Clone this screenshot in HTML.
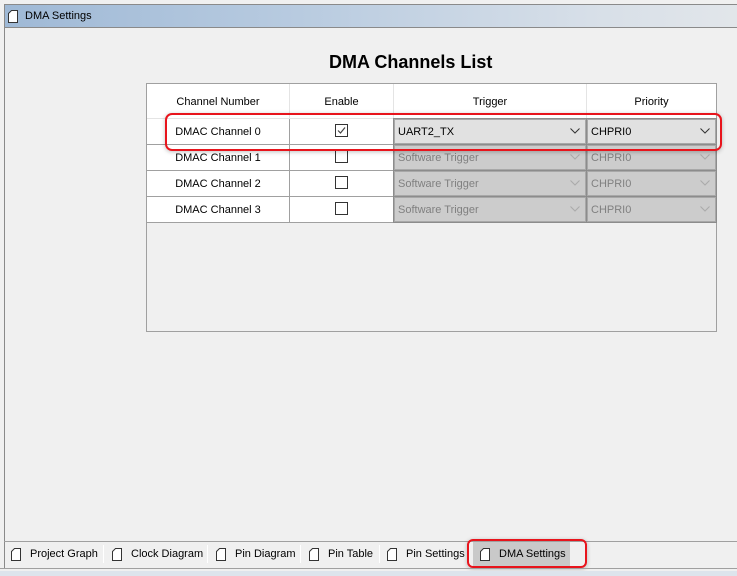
<!DOCTYPE html>
<html><head><meta charset="utf-8"><style>
*{margin:0;padding:0;box-sizing:border-box}
body{width:737px;height:576px;background:#f0f0f0;font-family:"Liberation Sans",sans-serif;font-size:11px;color:#000;position:relative;overflow:hidden}
.abs{position:absolute}
.doc{position:absolute;width:10px;height:13px}
.cell{position:absolute;display:flex;align-items:center;justify-content:center;font-size:11px;padding-top:1px}
.cb{position:absolute;border:1px solid #8c8c8c;box-shadow:inset 0 0 0 1px #a8a8a8;background:#cccccc;color:#808080;padding-left:4px;padding-top:1px;display:flex;align-items:center;font-size:11px}
.cb.on{background:#e1e1e1;color:#000}
.cb svg{position:absolute;right:6px;top:9px}
.chk{position:absolute;width:13px;height:13px;border:1px solid #333;background:#fff}
.tab{position:absolute;top:542px;height:24px;display:flex;align-items:center;font-size:11px}
.tab .doc{position:relative;margin-right:9px}
.sep{position:absolute;top:545px;width:1px;height:18px;background:#c8c8c8;border-right:1px solid #fff}
</style></head><body>
<div class="abs" style="left:4px;top:4px;width:733px;height:24px;border-top:1px solid #8a8a8a;border-bottom:1px solid #8a8a8a;border-left:1px solid #8a8a8a;background:linear-gradient(90deg,#9fb9d6,#b8cbe0 40%,#d7dfe8 80%,#e2e6ea)"></div>
<svg class="doc" style="left:8px;top:10px" viewBox="0 0 10 13"><path d="M3.5 0.5 H9.5 V12.5 H0.5 V3.5 Z" fill="#fff" stroke="#333"/></svg>
<div class="abs" style="left:25px;top:10px;font-size:11px">DMA Settings</div>
<div class="abs" style="left:4px;top:28px;width:1px;height:540px;background:#8a8a8a"></div>
<div class="abs" style="left:329px;top:52px;font-size:18px;font-weight:bold">DMA Channels List</div>
<div class="abs" style="left:146px;top:83px;width:571px;height:249px;border:1px solid #a0a0a0;background:#f0f0f0"></div>
<div class="abs" style="left:147px;top:84px;width:569px;height:138px;background:#fff"></div>
<div class="abs" style="left:289px;top:84px;width:1px;height:34px;background:#e4e4e4"></div>
<div class="abs" style="left:393px;top:84px;width:1px;height:34px;background:#e4e4e4"></div>
<div class="abs" style="left:586px;top:84px;width:1px;height:34px;background:#e4e4e4"></div>
<div class="cell" style="left:147px;top:84px;width:142px;height:35px">Channel Number</div>
<div class="cell" style="left:290px;top:84px;width:103px;height:35px">Enable</div>
<div class="cell" style="left:394px;top:84px;width:192px;height:35px">Trigger</div>
<div class="cell" style="left:587px;top:84px;width:129px;height:35px">Priority</div>
<div class="abs" style="left:147px;top:144px;width:246px;height:1px;background:#a0a0a0"></div>
<div class="abs" style="left:147px;top:170px;width:246px;height:1px;background:#a0a0a0"></div>
<div class="abs" style="left:147px;top:196px;width:246px;height:1px;background:#a0a0a0"></div>
<div class="abs" style="left:147px;top:222px;width:569px;height:1px;background:#a0a0a0"></div>
<div class="abs" style="left:289px;top:118px;width:1px;height:104px;background:#a0a0a0"></div>
<div class="abs" style="left:147px;top:118px;width:246px;height:1px;background:#e4e4e4"></div>
<div class="cell" style="left:147px;top:118px;width:142px;height:26px">DMAC Channel 0</div>
<div class="cell" style="left:147px;top:144px;width:142px;height:26px">DMAC Channel 1</div>
<div class="cell" style="left:147px;top:170px;width:142px;height:26px">DMAC Channel 2</div>
<div class="cell" style="left:147px;top:196px;width:142px;height:26px">DMAC Channel 3</div>
<div class="chk" style="left:335px;top:124px"><svg width="11" height="11" style="position:absolute;left:0;top:0"><path d="M2 5.5 L4.5 8 L9 2.5" stroke="#444" stroke-width="1.2" fill="none"/></svg></div>
<div class="chk" style="left:335px;top:150px"></div>
<div class="chk" style="left:335px;top:176px"></div>
<div class="chk" style="left:335px;top:202px"></div>
<div class="cb on" style="left:393px;top:118px;width:194px;height:27px">UART2_TX<svg width="10" height="6"><path d="M0.5 0.5 L5 5 L9.5 0.5" stroke="#333" fill="none"/></svg></div>
<div class="cb on" style="left:586px;top:118px;width:131px;height:27px">CHPRI0<svg width="10" height="6"><path d="M0.5 0.5 L5 5 L9.5 0.5" stroke="#333" fill="none"/></svg></div>
<div class="cb" style="left:393px;top:144px;width:194px;height:27px">Software Trigger<svg width="10" height="6"><path d="M0.5 0.5 L5 5 L9.5 0.5" stroke="#aaa" fill="none"/></svg></div>
<div class="cb" style="left:586px;top:144px;width:131px;height:27px">CHPRI0<svg width="10" height="6"><path d="M0.5 0.5 L5 5 L9.5 0.5" stroke="#aaa" fill="none"/></svg></div>
<div class="cb" style="left:393px;top:170px;width:194px;height:27px">Software Trigger<svg width="10" height="6"><path d="M0.5 0.5 L5 5 L9.5 0.5" stroke="#aaa" fill="none"/></svg></div>
<div class="cb" style="left:586px;top:170px;width:131px;height:27px">CHPRI0<svg width="10" height="6"><path d="M0.5 0.5 L5 5 L9.5 0.5" stroke="#aaa" fill="none"/></svg></div>
<div class="cb" style="left:393px;top:196px;width:194px;height:27px">Software Trigger<svg width="10" height="6"><path d="M0.5 0.5 L5 5 L9.5 0.5" stroke="#aaa" fill="none"/></svg></div>
<div class="cb" style="left:586px;top:196px;width:131px;height:27px">CHPRI0<svg width="10" height="6"><path d="M0.5 0.5 L5 5 L9.5 0.5" stroke="#aaa" fill="none"/></svg></div>
<div class="abs" style="left:165px;top:113px;width:557px;height:38px;border:2px solid #e8141c;border-radius:7px;box-shadow:0 1px 4px rgba(0,0,0,.25)"></div>
<div class="abs" style="left:4px;top:541px;width:733px;height:1px;background:#a0a0a0"></div>
<div class="abs" style="left:473px;top:542px;width:97px;height:24px;background:#c9c9c9"></div>
<div class="tab" style="left:11px"><svg class="doc" viewBox="0 0 10 13"><path d="M3.5 0.5 H9.5 V12.5 H0.5 V3.5 Z" fill="#fff" stroke="#333"/></svg>Project Graph</div>
<div class="sep" style="left:103px"></div>
<div class="tab" style="left:112px"><svg class="doc" viewBox="0 0 10 13"><path d="M3.5 0.5 H9.5 V12.5 H0.5 V3.5 Z" fill="#fff" stroke="#333"/></svg>Clock Diagram</div>
<div class="sep" style="left:207px"></div>
<div class="tab" style="left:216px"><svg class="doc" viewBox="0 0 10 13"><path d="M3.5 0.5 H9.5 V12.5 H0.5 V3.5 Z" fill="#fff" stroke="#333"/></svg>Pin Diagram</div>
<div class="sep" style="left:300px"></div>
<div class="tab" style="left:309px"><svg class="doc" viewBox="0 0 10 13"><path d="M3.5 0.5 H9.5 V12.5 H0.5 V3.5 Z" fill="#fff" stroke="#333"/></svg>Pin Table</div>
<div class="sep" style="left:379px"></div>
<div class="tab" style="left:387px"><svg class="doc" viewBox="0 0 10 13"><path d="M3.5 0.5 H9.5 V12.5 H0.5 V3.5 Z" fill="#fff" stroke="#333"/></svg>Pin Settings</div>
<div class="tab" style="left:480px"><svg class="doc" viewBox="0 0 10 13"><path d="M3.5 0.5 H9.5 V12.5 H0.5 V3.5 Z" fill="#fff" stroke="#333"/></svg>DMA Settings</div>
<div class="abs" style="left:467px;top:539px;width:120px;height:29px;border:2px solid #e8141c;border-radius:6px;box-shadow:0 1px 4px rgba(0,0,0,.25)"></div>
<div class="abs" style="left:0;top:568px;width:737px;height:1px;background:#a0a0a0"></div>
<div class="abs" style="left:0;top:571px;width:737px;height:5px;background:#dde4ec"></div>
</body></html>
